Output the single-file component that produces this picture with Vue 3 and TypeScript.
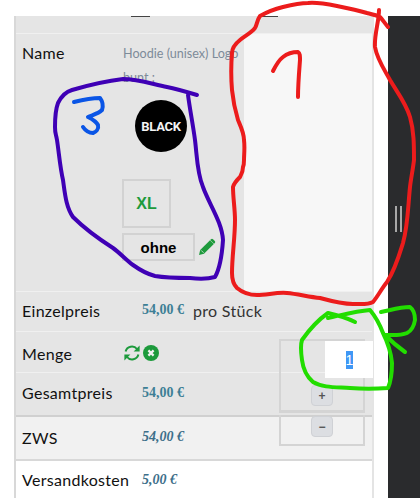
<template>
  <div class="page">
    <section class="cart">
      <div class="cart__head">
        <span class="cart__tick cart__tick--a"></span>
        <span class="cart__tick cart__tick--b"></span>
      </div>

      <div class="product">
        <div class="product__main">
          <div class="label product__label">Name</div>
          <div class="product__details">
            <p class="product__title">Hoodie (unisex) Logo</p>
            <p class="product__title">bunt :</p>
            <div class="swatch">BLACK</div>
            <div class="size">XL</div>
            <div class="print">
              <span class="print__box">ohne</span>
              <svg class="print__edit" width="18" height="18" viewBox="0 0 18 18">
                <path d="M1 17l1.2-5L12 2.2l3.8 3.8L6 15.8z" fill="#1d9a3c" />
                <path d="M13 1.2a1.4 1.4 0 012 0l1.8 1.8a1.4 1.4 0 010 2L16 5.8 12.2 2z" fill="#1d9a3c" />
                <path d="M3.2 12.4l2.4 2.4" stroke="#e5e5e5" stroke-width="0.8" />
              </svg>
            </div>
          </div>
        </div>
        <div class="product__preview"></div>
      </div>

      <div class="row row--price">
        <span class="label">Einzelpreis</span>
        <span class="price">54,00 €</span>
        <span class="price-unit">pro Stück</span>
      </div>

      <div class="row row--qty">
        <span class="label">Menge</span>
        <div class="qty-actions">
          <svg width="18" height="16" viewBox="0 0 18 16" fill="none">
            <path d="M2.6 6.4A6.5 6.5 0 0 1 14 4" stroke="#1d9a3c" stroke-width="2" />
            <path d="M16.6 0.6v6h-6z" fill="#1d9a3c" />
            <path d="M15.4 9.6A6.5 6.5 0 0 1 4 12" stroke="#1d9a3c" stroke-width="2" />
            <path d="M1.4 15.4v-6h6z" fill="#1d9a3c" />
          </svg>
          <svg width="16" height="16" viewBox="0 0 16 16">
            <circle cx="8" cy="8" r="8" fill="#1d9a3c" />
            <path d="M5.4 5.4l5.2 5.2M10.6 5.4l-5.2 5.2" stroke="#f2f2f2" stroke-width="2.2" />
          </svg>
        </div>
      </div>

      <div class="row row--total">
        <span class="label">Gesamtpreis</span>
        <span class="price">54,00 €</span>
      </div>

      <div class="row row--sub">
        <span class="label">ZWS</span>
        <span class="price price--italic">54,00 €</span>
      </div>

      <div class="row row--shipping">
        <span class="label">Versandkosten</span>
        <span class="price price--italic price--near">5,00 €</span>
      </div>

      <!-- spinner hangs over the row borders, like the broken mobile layout in the shot -->
      <div class="spinner spinner--up">
        <button class="spinner__btn" type="button">+</button>
      </div>
      <div class="spinner spinner--down">
        <button class="spinner__btn" type="button">−</button>
      </div>
      <div class="qty-input"><span class="qty-input__sel">1</span></div>
    </section>

    <aside class="sidebar">
      <span class="sidebar__grip"></span>
      <span class="sidebar__grip"></span>
    </aside>

    <svg class="scribbles" width="420" height="498" viewBox="0 0 420 498" fill="none">
      <path
        v-for="mark in marks"
        :key="mark.d"
        :d="mark.d"
        :stroke="mark.color"
        stroke-width="4"
        stroke-linecap="round"
        stroke-linejoin="round"
      />
    </svg>
  </div>
</template>

<script setup lang="ts">
interface Mark {
  d: string
  color: string
}

const RED = '#ec1c1c'
const PURPLE = '#3f00b5'
const BLUE = '#0a55e6'
const GREEN = '#22dd00'

// freehand annotations on top of the screenshot
const marks: Mark[] = [
  {
    color: RED,
    d: 'M388 27C384 22 382 19 380 17C376 15 371 14 367 13C357 10 347 8 337 6C327 4 317 2 308 3C299 3 291 5 283 7C275 9 267 12 260 16C257 20 257 25 255 28C251 33 245 36 240 40C235 44 232 48 232 53C231 65 231 78 232 90C233 100 235 110 238 120C241 127 244 133 244 140C245 148 244 154 244 160C244 163 244 165 243 167C243 172 241 175 240 177C237 180 234 183 233 187C233 198 235 209 235 220C235 238 232 256 232 273C232 280 234 285 237 288C243 293 250 295 257 295C267 295 277 292 287 293C298 294 309 297 320 298C331 301 342 304 353 304C360 304 368 305 373 302C378 296 382 288 387 282C395 270 399 256 403 243C408 225 408 206 410 187C411 178 413 169 414 160C414 145 414 131 410 117C406 103 397 92 390 80C384 69 377 59 375 47C374 35 379 22 379 10',
  },
  { color: RED, d: 'M273 71C276 65 279 60 283 57C288 53 293 52 298 52C300 53 300 56 300 60C299 73 298 85 298 97' },
  {
    color: PURPLE,
    d: 'M197 95C187 92 177 89 167 87C152 84 138 79 123 79C106 81 89 85 72 90C65 92 61 97 58 103C55 111 55 119 55 127C55 134 56 134 57 140C59 153 60 167 63 180C65 194 66 207 73 217C85 229 99 239 113 248C120 253 126 260 133 265C140 270 147 274 155 276C167 278 178 278 190 278C199 279 208 279 215 277C219 270 222 255 223 240C222 222 209 204 203 187C197 173 197 156 195 140C193 125 190 110 188 95',
  },
  { color: BLUE, d: 'M74 102C82 100 91 98 100 98C103 102 103 107 102 110C98 114 92 115 88 117C92 119 96 121 98 125C99 129 96 132 93 133C89 133 85 130 83 127' },
  {
    color: GREEN,
    d: 'M328 318C342 315 356 311 370 310C375 316 380 325 383 333C388 343 391 353 392 363C392 372 391 381 388 388C375 389 362 389 350 388C337 387 323 388 313 382C306 376 303 368 302 360C301 353 300 346 302 340C309 330 318 320 328 313C337 315 347 318 355 322',
  },
  { color: GREEN, d: 'M381 312C391 310 400 307 410 307C414 310 415 315 415 320C414 326 411 331 407 333C400 336 392 335 385 335C391 341 398 347 405 352' },
]
</script>

<style>
html,
body {
  margin: 0;
  background: #fff;
}
</style>

<style scoped>
* {
  box-sizing: border-box;
}

.page {
  position: relative;
  display: flex;
  width: 420px;
  height: 498px;
  padding-top: 16px;
  overflow: hidden;
  font-family: "Lato", "Open Sans", sans-serif;
  color: #111;
}

.cart {
  position: relative;
  width: 360px;
  margin-left: 14px;
  border-left: 2px solid #d8d8d8;
  border-right: 2px solid #e4e4e4;
}

.cart__head {
  position: relative;
  height: 18px;
  background: #e5e5e5;
  border-bottom: 1px solid #f0f0f0;
}

.cart__tick {
  position: absolute;
  top: 0;
  height: 1px;
  background: #444;
}

.cart__tick--a {
  left: 115px;
  width: 19px;
}

.cart__tick--b {
  left: 244px;
  width: 18px;
}

.product {
  display: flex;
  height: 257px;
  background: #e5e5e5;
}

.product__main {
  display: flex;
  flex: 1;
}

.label {
  font-size: 16px;
  letter-spacing: 0.3px;
  color: #111;
}

.product__label {
  width: 106px;
  padding: 9px 0 0 6px;
}

.product__details {
  flex: 1;
  padding-top: 11px;
  overflow: hidden;
}

.product__title {
  margin: 0;
  height: 24px;
  padding-left: 1px;
  font-size: 12.6px;
  line-height: 18px;
  white-space: nowrap;
  color: #7d8b99;
}

.swatch {
  display: flex;
  align-items: center;
  justify-content: center;
  width: 52px;
  height: 52px;
  margin: 7px 0 0 13px;
  border-radius: 50%;
  background: #000;
  color: #f4f4f4;
  font-family: "Roboto", sans-serif;
  font-size: 13px;
  font-weight: 700;
  letter-spacing: -0.3px;
}

.size {
  display: flex;
  align-items: center;
  justify-content: center;
  width: 49px;
  height: 49px;
  margin-top: 27px;
  border: 2px solid #d2d2d2;
  color: #1d9a3c;
  font-family: "Liberation Sans", sans-serif;
  font-size: 16px;
  font-weight: 700;
}

.print {
  display: flex;
  align-items: center;
  gap: 3px;
  margin-top: 5px;
}

.print__box {
  display: flex;
  align-items: center;
  justify-content: center;
  width: 73px;
  height: 28px;
  border: 2px solid #d2d2d2;
  color: #000;
  font-family: "Liberation Sans", sans-serif;
  font-size: 15px;
  font-weight: 700;
}

.product__preview {
  width: 128px;
  background: #f7f7f7;
}

.row {
  display: flex;
  align-items: center;
  padding-left: 6px;
}

.row .label {
  width: 120px;
  flex-shrink: 0;
}

.row--price {
  height: 40px;
  padding-bottom: 3px;
  background: #e5e5e5;
  border-top: 1px solid #f0f0f0;
}

.row--qty {
  height: 41px;
  align-items: flex-start;
  background: #e5e5e5;
  border-top: 1px solid #f0f0f0;
}

.row--qty .label {
  width: 101px;
  padding-top: 12px;
}

.row--total {
  height: 45px;
  padding-bottom: 3px;
  background: #e5e5e5;
  border-top: 1px solid #f0f0f0;
  border-bottom: 2px solid #d0d0d0;
}

.row--sub {
  height: 44px;
  padding-bottom: 2px;
  background: #f1f1f1;
  border-bottom: 2px solid #d8d8d8;
}

.row--shipping {
  flex: 1;
  height: 37px;
  background: #fff;
}

.price {
  font-family: "Liberation Serif", serif;
  font-size: 14px;
  font-weight: 700;
  color: #3d7f95;
  white-space: nowrap;
}

.price--italic {
  font-style: italic;
  color: #3d6f8a;
}

.price-unit {
  margin-left: 9px;
  font-size: 16px;
  letter-spacing: 0.3px;
  color: #333;
}

.qty-actions {
  display: flex;
  align-items: center;
  gap: 2px;
  margin-top: 13px;
}

.spinner {
  position: absolute;
  left: 263px;
  display: flex;
  justify-content: center;
  width: 86px;
  border: 2px solid #d4d4d4;
}

.spinner--up {
  top: 323px;
  height: 74px;
  padding-top: 44px;
  border-bottom-width: 3px;
}

.spinner--down {
  top: 399px;
  height: 31px;
  padding-top: 1px;
  border-top: 0;
}

.spinner__btn {
  display: flex;
  align-items: center;
  justify-content: center;
  width: 22px;
  height: 21px;
  padding: 0;
  border: 1px solid #cfd1d5;
  border-radius: 4px;
  background: #dcdee2;
  color: #555;
  font-family: "Liberation Sans", sans-serif;
  font-size: 12px;
  font-weight: 700;
}

.qty-input {
  position: absolute;
  top: 325px;
  left: 309px;
  display: flex;
  align-items: center;
  justify-content: center;
  width: 48px;
  height: 37px;
  background: #fff;
}

.qty-input__sel {
  width: 7px;
  height: 18px;
  background: #3f97f5;
  color: #fff;
  font-family: "Liberation Sans", sans-serif;
  font-size: 14px;
  line-height: 18px;
  text-align: center;
}

.sidebar {
  display: flex;
  align-items: flex-start;
  gap: 3px;
  width: 32px;
  margin-left: auto;
  padding: 190px 0 0 7px;
  background: #2a2b2d;
}

.sidebar__grip {
  width: 2px;
  height: 26px;
  background: #a8a8a8;
}

.scribbles {
  position: absolute;
  top: 0;
  left: 0;
  pointer-events: none;
}
</style>
